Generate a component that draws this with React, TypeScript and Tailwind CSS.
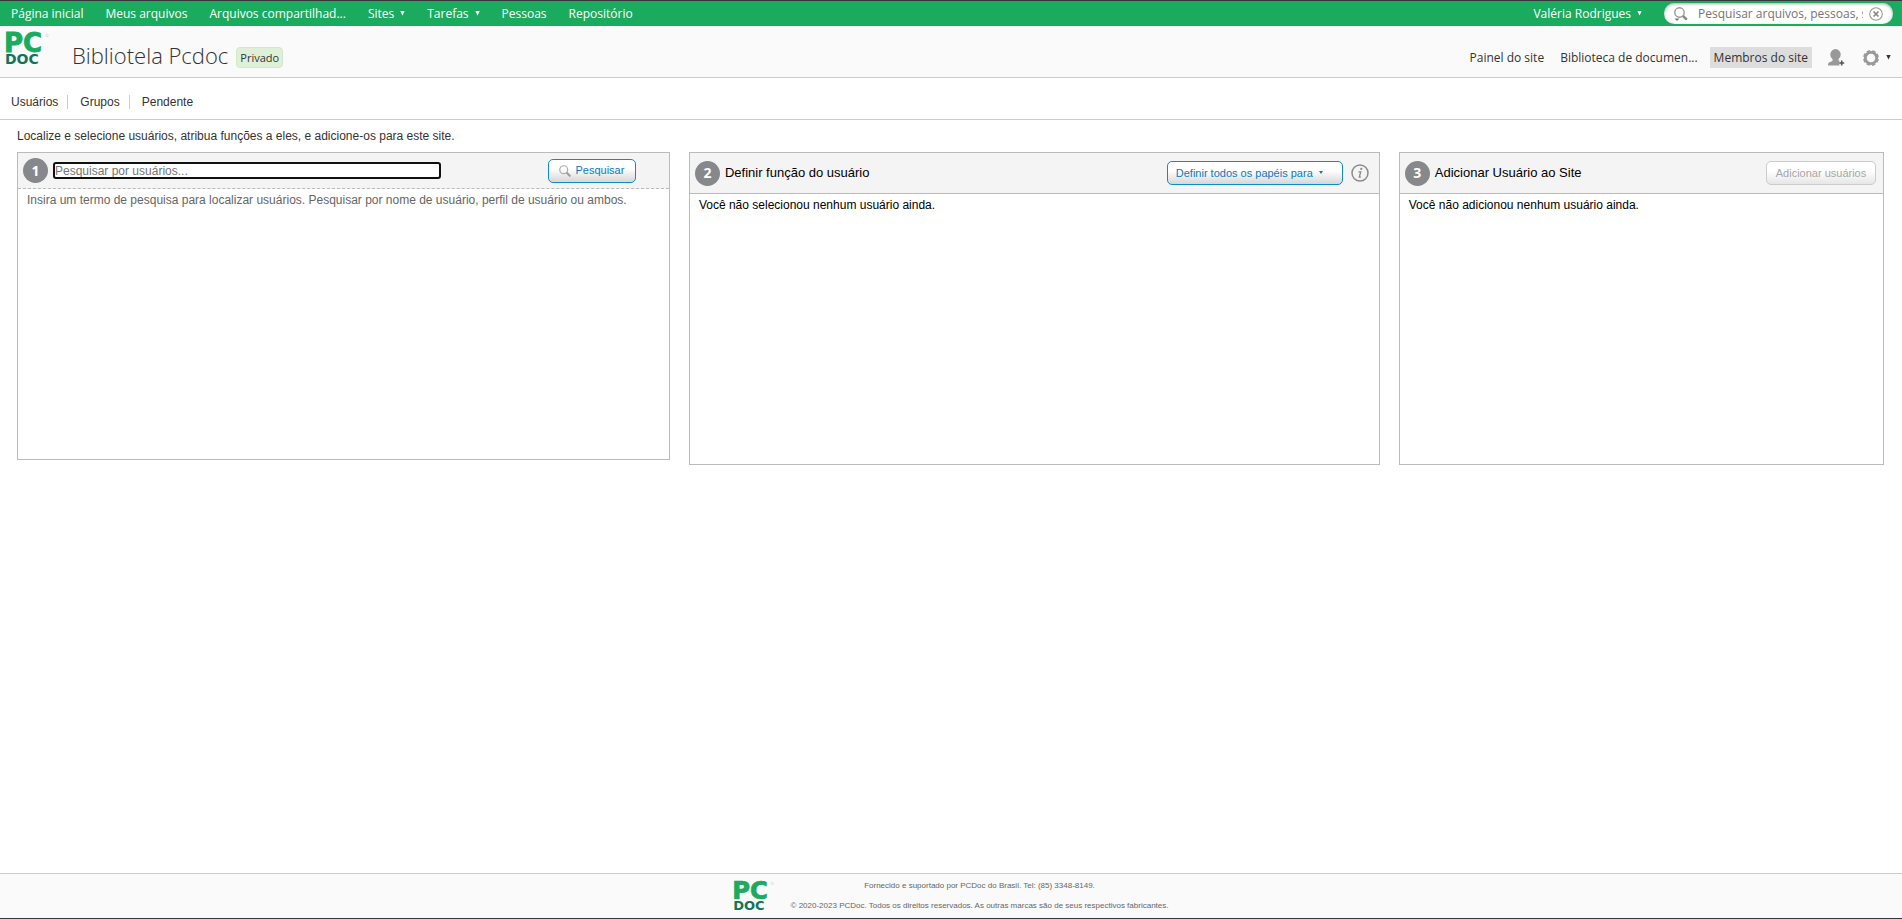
import type { ReactNode } from "react";

const NAV_LEFT = [
  { label: "Página inicial" },
  { label: "Meus arquivos" },
  { label: "Arquivos compartilhad..." },
  { label: "Sites", menu: true },
  { label: "Tarefas", menu: true },
  { label: "Pessoas" },
  { label: "Repositório" },
];

const TABS = ["Usuários", "Grupos", "Pendente"];

const ROLES = ["Gerente", "Colaborador", "Contribuidor", "Consumidor"];

function Caret({ className = "" }: { className?: string }) {
  return (
    <svg viewBox="0 0 5 5" className={`w-[5px] h-[5px] shrink-0 fill-current ${className}`} aria-hidden="true">
      <path d="M0.300 0h4.400L2.500 4.500z" />
    </svg>
  );
}

function Logo({ className }: { className: string }) {
  return (
    <svg viewBox="0 0 48 30" className={`overflow-visible ${className}`} role="img" aria-label="PCDoc">
      <text x="-2" y="18" fontFamily="DejaVu Sans" fontWeight="700" fontSize="26" fill="#1aab5f" stroke="#1aab5f" strokeWidth="0.8">PC</text>
      <text x="-1" y="30" fontFamily="DejaVu Sans" fontWeight="700" fontSize="14" fill="#12735a">DOC</text>
      <circle cx="41" cy="1.5" r="1.3" fill="none" stroke="#b9d9c9" strokeWidth="0.6" />
    </svg>
  );
}

function StepNumber({ n }: { n: number }) {
  return (
    <span className="flex items-center justify-center w-[25px] h-[25px] shrink-0 rounded-full bg-[#87888b] text-white font-['Open_Sans'] text-sm font-bold">
      {n}
    </span>
  );
}

function SearchIcon({ className }: { className: string }) {
  return (
    <svg viewBox="0 0 14 14" className={className} fill="none" aria-hidden="true">
      <circle cx="5.500" cy="5.500" r="4.600" stroke="#aaa" strokeWidth="1.400" />
      <path d="M9.500 9.500l3 3" stroke="#999" strokeWidth="2.400" strokeLinecap="round" />
    </svg>
  );
}

function TopBar() {
  return (
    <nav className="flex items-center justify-between h-[26px] border-t border-[#35363a] bg-[#1aab5f] pl-[11px] pr-[9px] font-['Open_Sans',sans-serif] text-[12px] text-white">
      <ul className="flex items-center gap-[22px]">
        {NAV_LEFT.map((item) => (
          <li key={item.label}>
            {item.menu ? (
              <button className="flex items-center gap-1.5">
                {item.label} <Caret />
              </button>
            ) : (
              <a href="#">{item.label}</a>
            )}
          </li>
        ))}
      </ul>
      <div className="flex items-center gap-[22px]">
        <button className="flex items-center gap-1.5">
          Valéria Rodrigues <Caret />
        </button>
        <form className="flex items-center w-[229px] h-[21px] rounded-full bg-white pl-2 pr-2.5 shadow-[inset_0_1px_3px_#aaa]">
          <button type="button" aria-label="Opções de pesquisa" className="shrink-0">
            <svg viewBox="0 0 16 16" className="w-4 h-4" fill="none">
              <circle cx="7.500" cy="6.500" r="4.700" stroke="#999" strokeWidth="1.400" />
              <path d="M11.500 10.500l2.700 2.500" stroke="#8c8c8c" strokeWidth="2.500" strokeLinecap="round" />
              <path d="M2.500 12.500h5L5 15z" fill="#777" />
            </svg>
          </button>
          <input
            type="text"
            aria-label="Pesquisar"
            placeholder="Pesquisar arquivos, pessoas, sites"
            className="flex-1 min-w-0 ml-2.5 mr-1.5 bg-transparent outline-none placeholder:text-[#757575]"
          />
          <button type="button" aria-label="Limpar" className="shrink-0">
            <svg viewBox="0 0 14 14" className="w-3.5 h-3.5" fill="none" stroke="#999">
              <circle cx="7" cy="7" r="6.300" strokeWidth="1.100" />
              <path d="M4.500 4.500l5 5M9.500 4.500l-5 5" stroke="#888" strokeWidth="1.700" />
            </svg>
          </button>
        </form>
      </div>
    </nav>
  );
}

function SiteHeader() {
  return (
    <header className="flex justify-between h-[52px] border-b border-[#ccc] bg-[#fafafa] pl-1.5 pr-[11px] font-['Open_Sans',sans-serif] text-[#333]">
      <div className="flex">
        <Logo className="w-12 h-[30px] mt-2" />
        <h1 className="ml-[18px] mt-[15px] text-[22px] leading-[28px] font-light">Bibliotela Pcdoc</h1>
        <span className="ml-2 mt-[21px] h-[21px] rounded border border-[#d3e8c5] bg-[#dff0d8] px-[3px] text-[11px] leading-[19px]">
          Privado
        </span>
      </div>
      <div className="flex items-center h-[21px] mt-[21px] text-[12px]">
        <a href="#" className="mr-4">Painel do site</a>
        <a href="#" className="mr-3">Biblioteca de documen...</a>
        <a href="#" className="bg-[#ddd] px-1 leading-[21px]">Membros do site</a>
        <button aria-label="Adicionar usuários" className="ml-4">
          <svg viewBox="0 0 17 17" className="w-[17px] h-[17px]">
            <ellipse cx="7.500" cy="5.500" rx="5.200" ry="5.400" fill="#999" />
            <path d="M4.500 10h6v1.500h1v5H0c0-2 .6-3 2-3.400l2.500-1.100z" fill="#999" />
            <path d="M13.700 11.500v5M11.200 14h5" stroke="#fafafa" strokeWidth="3" />
            <path d="M13.700 11.500v5M11.200 14h5" stroke="#555" strokeWidth="1.600" />
          </svg>
        </button>
        <button aria-label="Configurações" className="flex items-center gap-[7px] ml-[18px]">
          <svg viewBox="0 0 16 16" className="w-4 h-4" fill="none" stroke="#999">
            <circle cx="8" cy="8" r="5.700" strokeWidth="2.800" />
            <circle cx="8" cy="8" r="7.200" strokeWidth="1.500" strokeDasharray="3.600 2.055" strokeDashoffset="-1" />
          </svg>
          <Caret className="text-[#333]" />
        </button>
      </div>
    </header>
  );
}

function Panel({ className, header, children }: { className: string; header: ReactNode; children: ReactNode }) {
  return (
    <section className={`border border-[#bbb] bg-white ${className}`}>
      {header}
      <div className="px-[9px] leading-[22px]">{children}</div>
    </section>
  );
}

export default function App() {
  return (
    <div className="flex flex-col min-h-screen bg-white font-['Liberation_Sans',Arial,sans-serif] text-[12px] text-black">
      <TopBar />
      <SiteHeader />

      <nav className="flex items-center h-[42px] border-b border-[#ccc] pl-[11px] pt-[7px] text-[#333]">
        {TABS.map((tab, i) => (
          <a key={tab} href="#" className={i > 0 ? "border-l border-[#ccc] ml-[9px] pl-3 leading-[14px]" : "leading-[14px]"}>
            {tab}
          </a>
        ))}
      </nav>

      <main className="pl-[17px] pr-[18px] pt-[7px]">
        <p className="leading-[18px] text-[#333]">
          Localize e selecione usuários, atribua funções a eles, e adicione-os para este site.
        </p>

        <div className="grid grid-cols-[654fr_692fr_486fr] items-start gap-[19px] mt-[7px]">
          <Panel
            className="min-h-[308px] text-[#666]"
            header={
              <form className="flex items-center h-9 bg-[#f4f4f4] border-b border-dashed border-[#bbb] pl-[5px] pr-[33px]">
                <StepNumber n={1} />
                <input
                  type="text"
                  aria-label="Pesquisar por usuários"
                  placeholder="Pesquisar por usuários..."
                  className="w-[388px] h-[17px] ml-[5px] rounded-[3px] border-2 border-[#101010] bg-white outline-none placeholder:text-[#757575]"
                />
                <button
                  type="button"
                  className="flex items-center justify-center gap-1 w-[88px] h-6 ml-auto rounded-[5px] border border-[#0d8bcb] bg-linear-to-b from-white from-40% to-[#d6d6d6] text-[11px] text-[#0c79bf]"
                >
                  <SearchIcon className="w-3 h-3" />
                  Pesquisar
                </button>
              </form>
            }
          >
            Insira um termo de pesquisa para localizar usuários. Pesquisar por nome de usuário, perfil de usuário ou ambos.
          </Panel>

          <Panel
            className="min-h-[313px]"
            header={
              <div className="flex items-center h-[41px] bg-[#f4f4f4] border-b border-[#bbb] px-[5px]">
                <StepNumber n={2} />
                <h2 className="ml-[5px] text-[13px]">Definir função do usuário</h2>
                <div className="relative ml-auto mr-2 text-[#0c79bf]">
                  <select
                    aria-label="Definir todos os papéis para"
                    defaultValue=""
                    className="block appearance-none w-[176px] h-6 rounded-[5px] border border-[#0d8bcb] bg-linear-to-b from-white from-40% to-[#d6d6d6] pl-2 text-[11px]"
                  >
                    <option value="">Definir todos os papéis para</option>
                    {ROLES.map((role) => (
                      <option key={role}>{role}</option>
                    ))}
                  </select>
                  <svg viewBox="0 0 4 3" className="absolute right-5 top-2.5 w-1 h-[3px] fill-current pointer-events-none" aria-hidden="true">
                    <path d="M0 0h4L2 3z" />
                  </svg>
                </div>
                <button aria-label="Informações" className="mr-[5px]">
                  <svg viewBox="0 0 18 18" className="w-[18px] h-[18px]">
                    <circle cx="9" cy="9" r="8" fill="none" stroke="#8b8b8b" strokeWidth="1.500" />
                    <circle cx="10.300" cy="4.900" r="1.100" fill="#888" />
                    <path d="M7.500 7.800h2.200L8.300 13.200h1.600" fill="none" stroke="#888" strokeWidth="1.300" />
                  </svg>
                </button>
              </div>
            }
          >
            Você não selecionou nenhum usuário ainda.
          </Panel>

          <Panel
            className="min-h-[313px]"
            header={
              <div className="flex items-center h-[41px] bg-[#f4f4f4] border-b border-[#bbb] pl-[5px] pr-[7px]">
                <StepNumber n={3} />
                <h2 className="ml-[5px] text-[13px]">Adicionar Usuário ao Site</h2>
                <button
                  disabled
                  className="w-[110px] h-6 ml-auto rounded-[5px] border border-[#ccc] bg-linear-to-b from-white from-40% to-[#e6e6e6] text-[11px] text-[#a6a6a6]"
                >
                  Adicionar usuários
                </button>
              </div>
            }
          >
            Você não adicionou nenhum usuário ainda.
          </Panel>
        </div>
      </main>

      <footer className="flex justify-center gap-3 h-[46px] mt-auto border-t border-t-[#ccc] border-b border-b-[#35363a] bg-[#fafafa] text-[#666]">
        <Logo className="w-[45px] h-7 mt-2" />
        <div className="mt-[2px] text-center text-[8px] leading-[20px]">
          <p>Fornecido e suportado por PCDoc do Brasil. Tel: (85) 3348-8149.</p>
          <p>© 2020-2023 PCDoc. Todos os direitos reservados. As outras marcas são de seus respectivos fabricantes.</p>
        </div>
      </footer>
    </div>
  );
}
